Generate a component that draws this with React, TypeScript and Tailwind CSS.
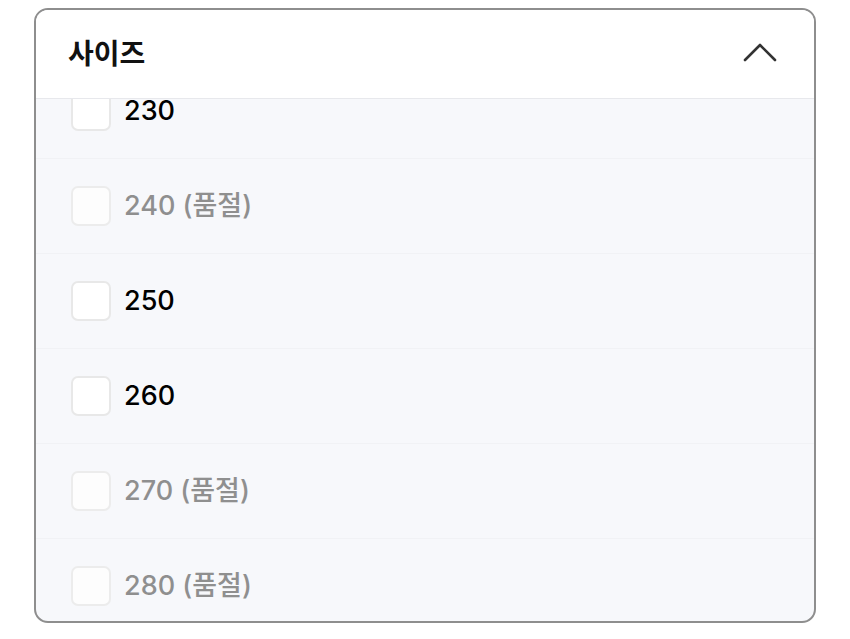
import React from "react";

const SIZES = [
  { label: "230", soldOut: false },
  { label: "240", soldOut: true },
  { label: "250", soldOut: false },
  { label: "260", soldOut: false },
  { label: "270", soldOut: true },
  { label: "280", soldOut: true },
];

const FONT = { fontFamily: 'Inter, "Noto Sans CJK KR", sans-serif' };

function SizeRow({ label, soldOut }: { label: string; soldOut: boolean }) {
  return (
    <label className="flex h-[95px] items-center gap-[13px] border-b border-[#f1f2f5] pl-[35px]">
      <span
        className={
          "h-[40px] w-[40px] rounded-[7px] border-2 " +
          (soldOut ? "border-[#ececec] bg-[#fdfdfd]" : "border-[#e8e8e8] bg-white")
        }
      />
      <span className={"text-[27px] font-medium " + (soldOut ? "text-[#8f8f8f]" : "text-black")}>
        {soldOut ? `${label} (품절)` : label}
      </span>
    </label>
  );
}

export default function App() {
  return (
    <div className="min-h-screen bg-white pl-[34px] pt-[8px]" style={FONT}>
      <div className="flex h-[615px] w-[782px] flex-col overflow-hidden rounded-[14px] border-2 border-[#8e8e8e] bg-[#f7f8fb]">
        {/* Header */}
        <div className="flex h-[89px] shrink-0 items-center justify-between border-b border-[#e7e8ec] bg-white pb-[4px] pl-[32px] pr-[37px]">
          <span
            className="text-[28px] font-bold text-[#111]"
            style={{ fontFamily: '"Noto Sans CJK KR", sans-serif' }}
          >
            사이즈
          </span>
          <svg width="34" height="19" viewBox="0 0 34 19" fill="none">
            <path d="M2 17L17 2L32 17" stroke="#333" strokeWidth="2.6" strokeLinecap="round" strokeLinejoin="round" />
          </svg>
        </div>

        {/* Options (scrolled) */}
        <div className="min-h-0 flex-1 overflow-hidden">
          <div className="-mt-[35px]">
            {SIZES.map((s) => (
              <SizeRow key={s.label} label={s.label} soldOut={s.soldOut} />
            ))}
          </div>
        </div>
      </div>
    </div>
  );
}
